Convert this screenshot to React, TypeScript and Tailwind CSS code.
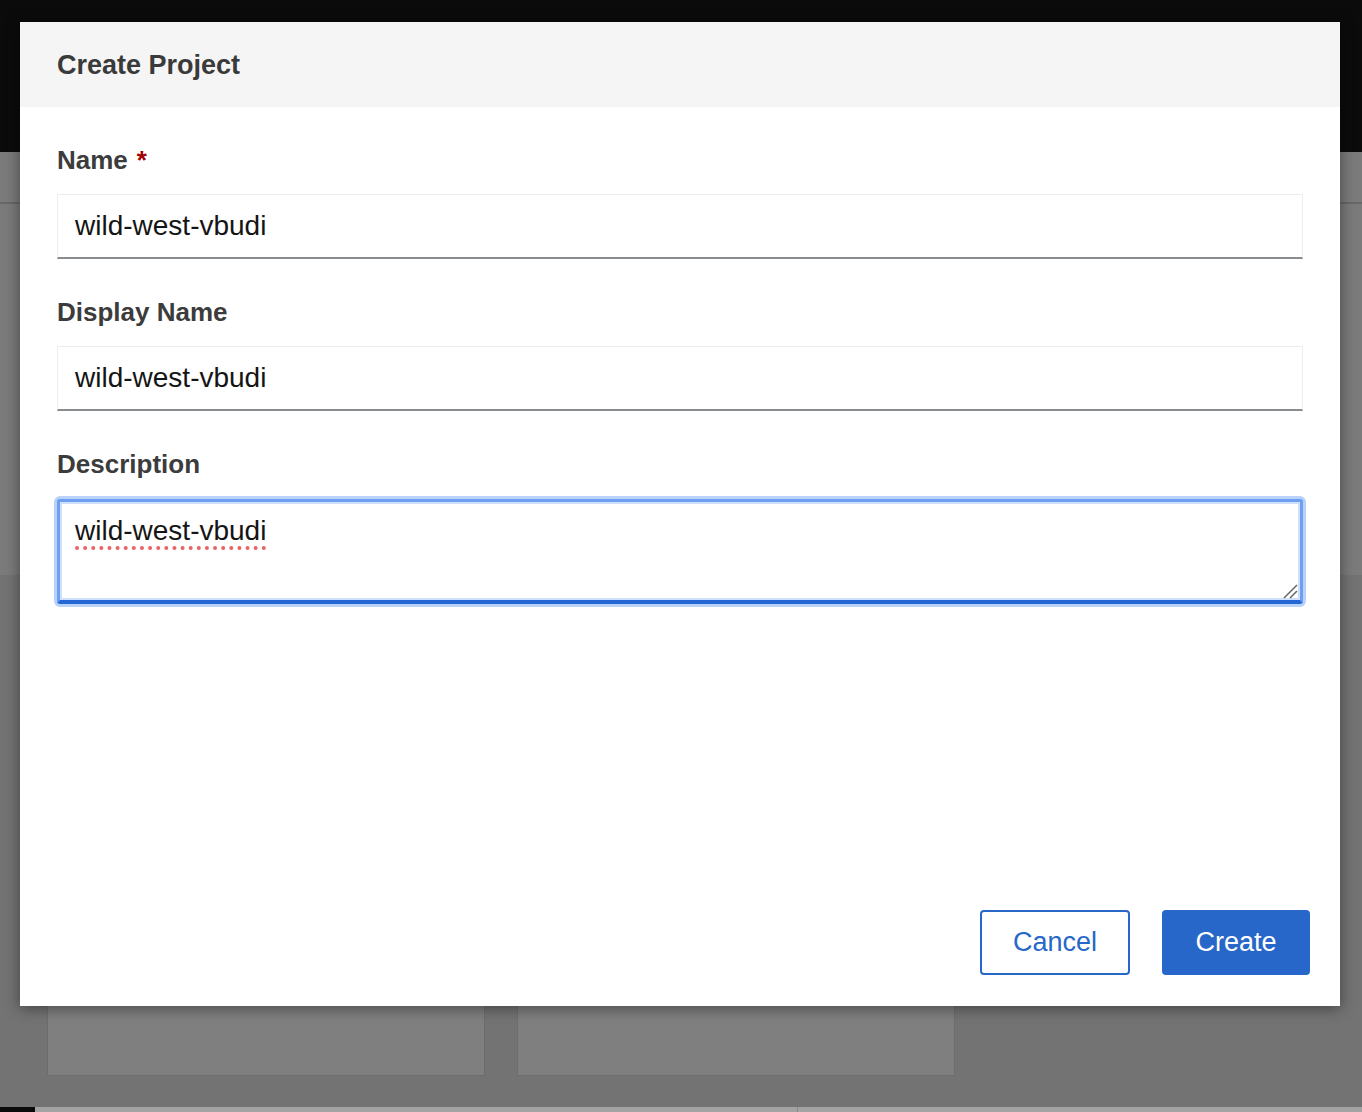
import React from "react";

const font = "font-['Liberation_Sans','Noto_Sans',sans-serif]";

const Field = ({
  label,
  required,
  value,
}: {
  label: string;
  required?: boolean;
  value: string;
}) => (
  <div className="flex flex-col gap-[16px]">
    <label className="text-[26px] leading-[36px] font-bold text-[#3c3c3c]">
      {label}
      {required && <span className="ml-[9px] text-[#a30000]">*</span>}
    </label>
    <div className="h-[65px] flex items-center border border-[#ededed] border-b-2 border-b-[#8a8d90] pl-[17px] text-[28px] text-[#151515]">
      {value}
    </div>
  </div>
);

export default function App() {
  return (
    <div className={`relative h-[1112px] overflow-hidden bg-[#737373] ${font}`}>
      {/* page under the backdrop */}
      <div className="h-[152px] bg-[#0b0b0b]" />
      <div className="h-[52px] bg-[#7b7b7b] border-b-2 border-[#686868]" />
      <div className="h-[371px] bg-[#7b7b7b]" />
      <div className="h-[532px] flex items-end gap-[32px] px-[47px] pb-[31px]">
        <div className="h-[250px] w-[438px] bg-[#7f7f7f] border border-[#6d6d6d]" />
        <div className="h-[250px] w-[438px] bg-[#7f7f7f] border border-[#6d6d6d]" />
      </div>
      <div className="flex h-[30px]">
        <div className="w-[35px] bg-[#0b0b0b]" />
        <div className="w-[763px] bg-[#a3a3a3] border-r border-[#8a8a8a]" />
        <div className="flex-1 bg-[#a3a3a3]" />
      </div>

      {/* modal */}
      <div className="absolute left-[20px] top-[22px] w-[1320px] h-[984px] bg-white flex flex-col shadow-[0_2px_14px_rgba(0,0,0,0.45)]">
        <div className="h-[85px] shrink-0 bg-[#f5f5f5] flex items-center px-[37px]">
          <h1 className="text-[27px] font-bold text-[#3a3a3a] pt-[1px]">Create Project</h1>
        </div>

        <div className="flex-1 px-[37px] pt-[35px] flex flex-col gap-[35px]">
          <Field label="Name" required value="wild-west-vbudi" />
          <Field label="Display Name" value="wild-west-vbudi" />
          <div className="flex flex-col gap-[17px]">
            <label className="text-[26px] leading-[36px] font-bold text-[#3c3c3c]">
              Description
            </label>
            <div className="relative h-[105px] rounded-[3px] border-[3px] border-[#6f9ff0] border-b-[4px] border-b-[#2366d4] shadow-[0_0_0_3px_#b9d2fa,inset_0_0_0_2px_#cfe0fc] pl-[15px] pt-[11px] text-[28px] leading-[36px] text-[#151515]">
              <span className="underline decoration-dotted decoration-[#ea6262] decoration-[4px] underline-offset-[6px]">
                wild-west-vbudi
              </span>
              <svg
                className="absolute right-[2px] bottom-[1px]"
                width="16"
                height="16"
                viewBox="0 0 16 16"
              >
                <path d="M2 15 L15 2" stroke="#6b6b6b" strokeWidth="1.6" />
                <path d="M8 15 L15 8" stroke="#6b6b6b" strokeWidth="1.6" />
              </svg>
            </div>
          </div>
        </div>

        <div className="shrink-0 flex justify-end gap-[32px] pr-[30px] pb-[31px]">
          <button className="w-[150px] h-[65px] rounded-[4px] border-2 border-[#2667c9] text-[27px] text-[#2667c9] bg-white">
            Cancel
          </button>
          <button className="w-[148px] h-[65px] rounded-[4px] bg-[#2667c9] text-[27px] text-white">
            Create
          </button>
        </div>
      </div>
    </div>
  );
}
